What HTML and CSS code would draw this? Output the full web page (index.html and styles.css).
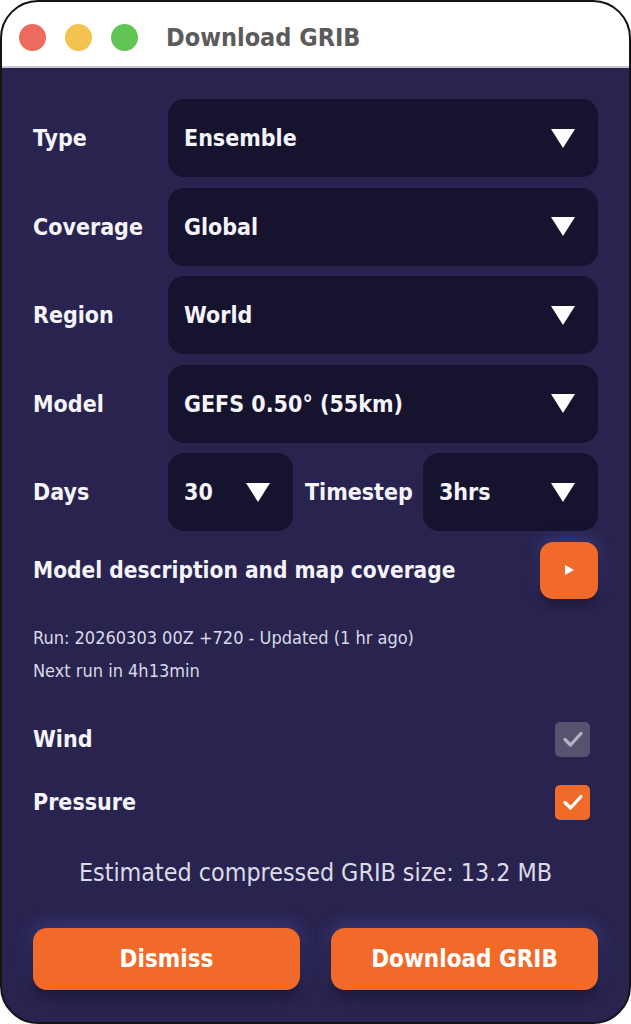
FILE: index.html
```html
<!DOCTYPE html>
<html lang="en">
<head>
    <meta charset="UTF-8">
    <title>Download GRIB</title>
    <link rel="stylesheet" href="styles.css">
</head>
<body>
    <div class="window">
        <div class="titlebar">
            <span class="light red"></span>
            <span class="light yellow"></span>
            <span class="light green"></span>
            <span class="title">Download GRIB</span>
        </div>

        <div class="content">
            <div class="row">
                <div class="label">Type</div>
                <div class="select wide"><span>Ensemble</span><i class="arrow"></i></div>
            </div>
            <div class="row">
                <div class="label">Coverage</div>
                <div class="select wide"><span>Global</span><i class="arrow"></i></div>
            </div>
            <div class="row">
                <div class="label">Region</div>
                <div class="select wide"><span>World</span><i class="arrow"></i></div>
            </div>
            <div class="row">
                <div class="label">Model</div>
                <div class="select wide"><span>GEFS 0.50° (55km)</span><i class="arrow"></i></div>
            </div>
            <div class="row">
                <div class="label">Days</div>
                <div class="select days"><span>30</span><i class="arrow"></i></div>
                <div class="label inline">Timestep</div>
                <div class="select wide"><span>3hrs</span><i class="arrow"></i></div>
            </div>

            <div class="info-row">
                <div class="label">Model description and map coverage</div>
                <button class="play-btn">
                    <svg width="14" height="14" viewBox="0 0 14 14"><path d="M3 2 L12 7 L3 12 Z" fill="#fff"/></svg>
                </button>
            </div>

            <div class="run">
                <div>Run: 20260303 00Z +720 - Updated (1 hr ago)</div>
                <div>Next run in 4h13min</div>
            </div>

            <div class="check-row first">
                <div class="label">Wind</div>
                <span class="check disabled">
                    <svg width="24" height="24" viewBox="0 0 24 24"><path d="M4 12.5 L9.5 18 L20 6.5" fill="none" stroke="#b4b2c6" stroke-width="3.2" stroke-linecap="round" stroke-linejoin="round"/></svg>
                </span>
            </div>
            <div class="check-row">
                <div class="label">Pressure</div>
                <span class="check on">
                    <svg width="24" height="24" viewBox="0 0 24 24"><path d="M4 12.5 L9.5 18 L20 6.5" fill="none" stroke="#fff" stroke-width="3.2" stroke-linecap="round" stroke-linejoin="round"/></svg>
                </span>
            </div>

            <div class="estimate">Estimated compressed GRIB size: 13.2 MB</div>

            <div class="actions">
                <button class="btn">Dismiss</button>
                <button class="btn">Download GRIB</button>
            </div>
        </div>
    </div>
</body>
</html>
```

FILE: styles.css
```css
body {
    margin: 0;
    padding: 0;
    background: #fff;
    font-family: "DejaVu Sans Condensed", "DejaVu Sans", sans-serif;
    font-stretch: condensed;
}

.window {
    width: 631px;
    height: 1024px;
    box-sizing: border-box;
    border: 2px solid #141414;
    border-radius: 38px;
    overflow: hidden;
    display: flex;
    flex-direction: column;
    background: #29244f;
}

.titlebar {
    height: 66px;
    box-sizing: border-box;
    padding: 6px 0 0 17px;
    background: #fff;
    border-bottom: 2px solid #c9c8d2;
    display: flex;
    align-items: center;
    flex-shrink: 0;
}

.light {
    width: 27px;
    height: 27px;
    border-radius: 50%;
    margin-right: 19px;
}

.red { background: #ec6a5e; }
.yellow { background: #f4c24e; }
.green { background: #60c554; }

.title {
    margin-left: 9px;
    font-size: 25px;
    font-weight: bold;
    color: #5b5b5b;
}

.content {
    flex: 1;
    padding: 31px 31px 0 31px;
    color: #f4f4fa;
}

.row {
    display: flex;
    align-items: center;
    height: 78px;
    margin-bottom: 10.5px;
}

.label {
    width: 135px;
    font-size: 23px;
    font-weight: bold;
    flex-shrink: 0;
}

.label.inline {
    width: auto;
    margin: 0 10px 0 12px;
}

.select {
    height: 78px;
    box-sizing: border-box;
    background: #15132e;
    border-radius: 16px;
    display: flex;
    align-items: center;
    justify-content: space-between;
    padding: 0 23px 0 16px;
    font-size: 23px;
    font-weight: bold;
}

.select.wide { flex: 1; }
.select.days { width: 125px; }

.arrow {
    width: 0;
    height: 0;
    border-left: 12px solid transparent;
    border-right: 12px solid transparent;
    border-top: 19px solid #fff;
}

.info-row {
    display: flex;
    align-items: center;
    justify-content: space-between;
    margin-top: 1px;
}

.info-row .label {
    width: auto;
    font-size: 22.5px;
}

.play-btn {
    width: 58px;
    height: 57px;
    border: none;
    border-radius: 13px;
    background: #f26a2a;
    display: flex;
    align-items: center;
    justify-content: center;
    padding: 0;
    box-shadow: 0 5px 10px rgba(0, 0, 0, 0.45), 0 -2px 14px rgba(110, 110, 230, 0.35);
}

.run {
    margin-top: 22px;
    font-size: 18px;
    line-height: 33px;
    color: #d9d9e6;
    font-weight: 300;
}

.check-row {
    display: flex;
    align-items: center;
    justify-content: space-between;
    height: 63px;
    padding-right: 8px;
}

.check-row.first { margin-top: 21px; }

.check {
    width: 35px;
    height: 35px;
    border-radius: 5px;
    display: flex;
    align-items: center;
    justify-content: center;
}

.check.disabled { background: #57536f; }
.check.on { background: #f06a2a; }

.estimate {
    text-align: center;
    margin-top: 24px;
    font-size: 24.8px;
    font-weight: 300;
    color: #dcdbe8;
}

.actions {
    display: flex;
    justify-content: space-between;
    margin-top: 41px;
}

.btn {
    width: 267px;
    height: 62px;
    border: none;
    border-radius: 14px;
    background: #f26a2a;
    color: #fff;
    font-family: inherit;
    font-stretch: condensed;
    font-size: 24px;
    font-weight: bold;
    box-shadow: 0 6px 12px rgba(0, 0, 0, 0.45), 0 -3px 16px rgba(110, 110, 230, 0.35);
}
```
